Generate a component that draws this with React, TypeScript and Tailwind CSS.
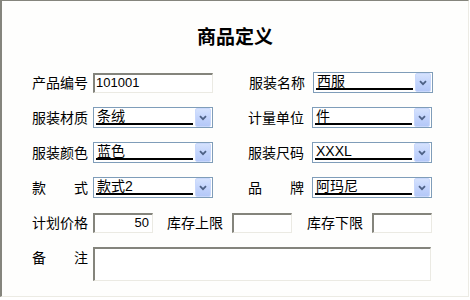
import React from "react";

const FONT = "font-['Liberation_Sans','Noto_Sans_CJK_SC',sans-serif]";

function Label({ text, w = 56 }: { text: string; w?: number }) {
  return (
    <div
      className={`${FONT} text-[14px] leading-[20px] text-black whitespace-nowrap`}
      style={{ width: w }}
    >
      {text}
    </div>
  );
}

function SpreadLabel({ a, b }: { a: string; b: string }) {
  return (
    <div className={`${FONT} w-[56px] flex justify-between text-[14px] leading-[20px] text-black`}>
      <span>{a}</span>
      <span>{b}</span>
    </div>
  );
}

function Combo({ value }: { value: string }) {
  return (
    <div className="flex items-center h-[21px] w-[120px] border border-[#7f9db9] bg-white">
      <div className="flex-1 h-full pl-[2px] pr-[2px]">
        <div className={`${FONT} h-[17px] border-b-2 border-black text-[14px] leading-[16px] pl-[1px] text-black`}>
          {value}
        </div>
      </div>
      <div className="w-[16px] h-[19px] mr-[1px] rounded-[2px] bg-gradient-to-b from-[#d5e2fd] via-[#c3d4fc] to-[#b4c8f8] border border-[#c9d8fc] flex items-center justify-center">
        <svg width="8" height="6" viewBox="0 0 8 6">
          <path d="M1 1.2 L4 4.2 L7 1.2" fill="none" stroke="#4d6185" strokeWidth="1.8" />
        </svg>
      </div>
    </div>
  );
}

function Edit({ w, value = "", right = false, h = 20 }: { w: number; value?: string; right?: boolean; h?: number }) {
  return (
    <div
      className={`${FONT} border-t-2 border-l-2 border-r border-b border-t-[#84847c] border-l-[#84847c] border-r-[#ebeae3] border-b-[#ebeae3] bg-white text-[13px] leading-[16px] text-black ${
        right ? "text-right pr-[3px]" : "pl-[1px]"
      }`}
      style={{ width: w, height: h }}
    >
      {value}
    </div>
  );
}

export default function App() {
  return (
    <div className="w-[470px] h-[300px] bg-white">
      <div className="w-[469px] h-[297px] border-t border-l-2 border-r border-b border-t-[#85857d] border-l-[#85857d] border-r-[#ecebe4] border-b-[#ecebe4] bg-[#fefefd] flex flex-col">
        <div className={`${FONT} pt-[25px] h-[49px] text-center text-[19px] leading-[24px] font-bold text-black`}>
          商品定义
        </div>
        <div className="pl-[30px] pt-[22px] flex flex-col gap-[14px]">
          <div className="flex items-center h-[21px]">
            <Label text="产品编号" />
            <div className="ml-[5px]">
              <Edit w={120} value="101001" />
            </div>
            <div className="ml-[36px]">
              <Label text="服装名称" />
            </div>
            <div className="ml-[8px]">
              <Combo value="西服" />
            </div>
          </div>
          <div className="flex items-center h-[21px]">
            <Label text="服装材质" />
            <div className="ml-[5px]">
              <Combo value="条绒" />
            </div>
            <div className="ml-[35px]">
              <Label text="计量单位" />
            </div>
            <div className="ml-[8px]">
              <Combo value="件" />
            </div>
          </div>
          <div className="flex items-center h-[21px]">
            <Label text="服装颜色" />
            <div className="ml-[5px]">
              <Combo value="蓝色" />
            </div>
            <div className="ml-[35px]">
              <Label text="服装尺码" />
            </div>
            <div className="ml-[8px]">
              <Combo value="XXXL" />
            </div>
          </div>
          <div className="flex items-center h-[21px]">
            <SpreadLabel a="款" b="式" />
            <div className="ml-[5px]">
              <Combo value="款式2" />
            </div>
            <div className="ml-[35px]">
              <SpreadLabel a="品" b="牌" />
            </div>
            <div className="ml-[8px]">
              <Combo value="阿玛尼" />
            </div>
          </div>
          <div className="flex items-center h-[21px]">
            <Label text="计划价格" />
            <div className="ml-[5px]">
              <Edit w={60} value="50" right />
            </div>
            <div className="ml-[14px]">
              <Label text="库存上限" />
            </div>
            <div className="ml-[9px]">
              <Edit w={60} />
            </div>
            <div className="ml-[15px]">
              <Label text="库存下限" />
            </div>
            <div className="ml-[9px]">
              <Edit w={60} />
            </div>
          </div>
          <div className="flex items-start h-[34px]">
            <div className="pt-[1px]">
              <SpreadLabel a="备" b="注" />
            </div>
            <div className="ml-[5px]">
              <Edit w={338} h={34} />
            </div>
          </div>
        </div>
      </div>
    </div>
  );
}
